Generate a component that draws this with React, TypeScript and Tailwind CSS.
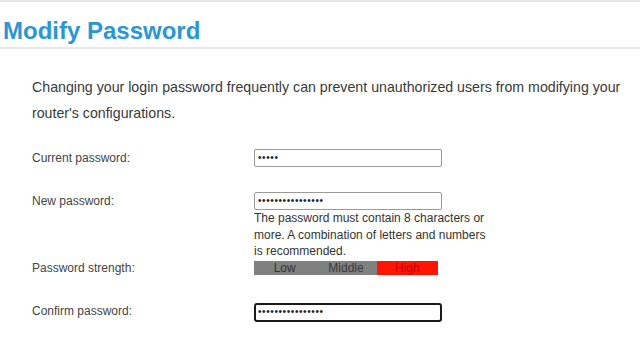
const FONT = { fontFamily: '"Liberation Sans", Arial, sans-serif' };

function Dots({ count }: { count: number }) {
  return (
    <span className="text-[10px] leading-none text-[#222] tracking-[0.6px]">{'•'.repeat(count)}</span>
  );
}

function PasswordBox({ count, focused }: { count: number; focused?: boolean }) {
  return (
    <div
      className={
        focused
          ? 'w-[188px] h-[19px] flex items-center pl-[2px] rounded-[3px] border-2 border-[#1a1a1a] bg-white'
          : 'w-[188px] h-[18px] flex items-center pl-[3px] rounded-[2px] border border-[#9a9a9a] bg-white'
      }
    >
      <Dots count={count} />
    </div>
  );
}

function Label({ children }: { children: React.ReactNode }) {
  return <div className="w-[222px] shrink-0 text-[12px] leading-[16px] text-[#444]">{children}</div>;
}

export default function App() {
  return (
    <div className="w-[640px] h-[360px] bg-white overflow-hidden border-t-2 border-[#e6e6e6]" style={FONT}>
      <header className="h-[47px] border-b-2 border-[#e8e8e8] flex items-end pl-[3px] pb-[1px]">
        <h1 className="text-[24px] font-bold text-[#2a97d0] leading-[30px]">Modify Password</h1>
      </header>

      <div className="pl-[32px] pr-[6px]">
        <p className="mt-[25px] text-[14.2px] leading-[26px] text-[#3a3a3a]">
          Changing your login password frequently can prevent unauthorized users from modifying your router's configurations.
        </p>

        <div className="mt-[23px] flex items-start">
          <Label>
            <div className="pt-[1px]">Current password:</div>
          </Label>
          <PasswordBox count={5} />
        </div>

        <div className="mt-[25px] flex items-start">
          <Label>
            <div className="pt-[1px]">New password:</div>
          </Label>
          <div className="flex flex-col">
            <PasswordBox count={16} />
            <div className="w-[240px] text-[12px] leading-[16.5px] text-[#333]">
              The password must contain 8 characters or more. A combination of letters and numbers is recommended.
            </div>
          </div>
        </div>

        <div className="flex items-center">
          <Label>Password strength:</Label>
          <div className="flex h-[14px] w-[184px] text-[12px] leading-[14px]">
            <div className="flex-1 bg-[#808080] text-[#333] text-center">Low</div>
            <div className="flex-1 bg-[#808080] text-[#3a3a3a] text-center">Middle</div>
            <div className="flex-1 bg-[#ff1500] text-[#c40000] text-center">High</div>
          </div>
        </div>

        <div className="mt-[27px] flex items-start">
          <Label>
            <div className="pt-[0px]">Confirm password:</div>
          </Label>
          <PasswordBox count={16} focused />
        </div>
      </div>
    </div>
  );
}
